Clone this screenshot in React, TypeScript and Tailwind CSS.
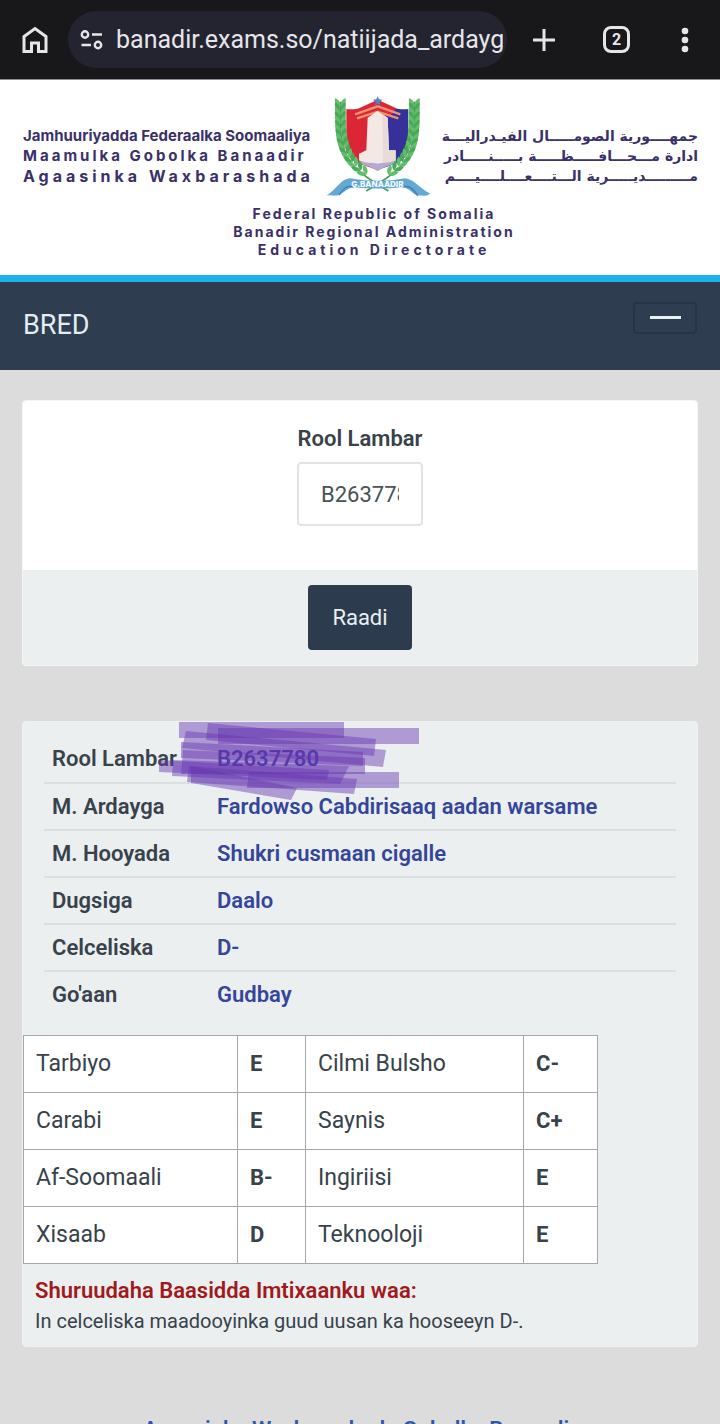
import React from "react";

const details = [
  { label: "Rool Lambar", value: "B2637780" },
  { label: "M. Ardayga", value: "Fardowso Cabdirisaaq aadan warsame" },
  { label: "M. Hooyada", value: "Shukri cusmaan cigalle" },
  { label: "Dugsiga", value: "Daalo" },
  { label: "Celceliska", value: "D-" },
  { label: "Go'aan", value: "Gudbay" },
];

const grades = [
  ["Tarbiyo", "E", "Cilmi Bulsho", "C-"],
  ["Carabi", "E", "Saynis", "C+"],
  ["Af-Soomaali", "B-", "Ingiriisi", "E"],
  ["Xisaab", "D", "Teknooloji", "E"],
];

function BrowserBar() {
  return (
    <header className="flex h-20 shrink-0 items-center border-b border-[#8d8d90] bg-[#18181a] pr-6 pl-[22px] text-[#e6e6ea]">
      <button type="button" aria-label="Home" className="mr-5 shrink-0">
        <svg viewBox="0 0 26 28" className="h-7 w-[26px]" fill="none" stroke="currentColor" strokeWidth="3">
          <path d="M2 25.5V10.5L13 2.5l11 8v15h-7.500V17h-7v8.500Z" />
        </svg>
      </button>
      <div className="flex h-[57px] min-w-0 flex-1 items-center rounded-full bg-[#23242f] pr-1 pl-3">
        <svg viewBox="0 0 24 20" className="mr-3 h-5 w-6 shrink-0" fill="none" stroke="currentColor" strokeWidth="2.4">
          <circle cx="5" cy="4.500" r="3.200" />
          <path d="M12 4.500h10M1.500 15h9.500" />
          <circle cx="18" cy="15" r="3.200" />
        </svg>
        <input
          type="text"
          aria-label="Address"
          defaultValue="banadir.exams.so/natiijada_ardayg"
          className="w-full min-w-0 bg-transparent font-['Roboto',sans-serif] text-[25px] leading-8 outline-none"
        />
      </div>
      <button type="button" aria-label="New tab" className="ml-6 shrink-0">
        <svg viewBox="0 0 26 26" className="size-[26px]" stroke="currentColor" strokeWidth="3" fill="none">
          <path d="M13 2v22M2 13h22" />
        </svg>
      </button>
      <button
        type="button"
        aria-label="Open tabs"
        className="ml-[46px] flex size-[27px] shrink-0 items-center justify-center rounded-lg border-3 border-[#e6e6ea] font-['Roboto',sans-serif] text-base leading-4 font-bold"
      >
        2
      </button>
      <button type="button" aria-label="Menu" className="ml-11 flex w-[22px] shrink-0 justify-center">
        <svg viewBox="0 0 8 26" className="h-[26px] w-2" fill="currentColor">
          <circle cx="4" cy="4" r="3.300" />
          <circle cx="4" cy="13" r="3.300" />
          <circle cx="4" cy="22" r="3.300" />
        </svg>
      </button>
    </header>
  );
}

const leaves = Array.from({ length: 17 }, (_, i) => i);

function Branch() {
  return (
    <g>
      <path d="M64 50C62 130 62 190 96 236C125 270 165 290 208 318" fill="none" stroke="#3f9a4c" strokeWidth="5" />
      {leaves.map((i) => {
        const t = i / 16;
        const x = 64 + 72 * t * t * t * t;
        const y = 58 + 205 * t;
        const turn = -46 * t * t * t;
        return (
          <g key={i} transform={`translate(${x} ${y}) rotate(${turn})`} fill={i % 2 ? "#4aa957" : "#62bd6c"}>
            <path d="M0 8C-14 6 -18 -6 -16 -18C-4 -14 1 -4 0 8Z" />
            <path d="M0 8C14 6 18 -6 16 -18C4 -14 -1 -4 0 8Z" />
          </g>
        );
      })}
    </g>
  );
}

function Emblem() {
  return (
    <svg viewBox="0 0 360 360" className="size-[120px] shrink-0" role="img" aria-label="G.Banaadir">
      <path d="M82 72C112 76 144 66 176 44V258C152 240 90 240 82 196Z" fill="#dc2637" />
      <path d="M176 44C208 66 238 76 268 72V196C260 240 200 240 176 258Z" fill="#35309a" />
      <path d="M120 70L176 44L232 70L214 92H138Z" fill="#dc2637" />
      <path d="M108 88L176 64L244 88M114 100L176 80L238 100" fill="none" stroke="#ee9270" strokeWidth="7" />
      <path d="M146 98L175 78L206 98L210 196H230V232C210 238 192 246 176 258C160 246 142 238 120 232V206L142 196Z" fill="#f3e8e4" />
      <path d="M190 88L206 98L210 196H230V232L192 238Z" fill="#e8dbd8" />
      <path d="M120 226C142 236 160 232 176 236C192 232 210 236 230 226V236C210 240 192 246 176 258C160 246 142 240 120 236Z" fill="#b6a8d0" />
      <path d="M176 34l4 9 10 1-8 7 3 10-9-5-9 5 3-10-8-7 10-1Z" fill="#4a83bd" />
      <Branch />
      <g transform="translate(350 0) scale(-1 1)">
        <Branch />
      </g>
      <path d="M92 280C150 290 205 290 258 280C286 282 300 310 334 326C318 336 306 330 296 332C280 326 272 310 250 306C204 312 146 312 104 306C84 310 74 324 60 330C46 334 34 328 22 332C54 312 66 282 92 280Z" fill="#62a9d6" />
      <path d="M60 330C74 310 84 300 104 306M296 332C282 310 270 300 250 306" fill="none" stroke="#3b7fb4" strokeWidth="4" />
      <text x="175" y="305" textAnchor="middle" fontFamily="Inter, sans-serif" fontWeight="800" fontSize="24" fill="#f4fbff">
        G.BANAADIR
      </text>
    </svg>
  );
}

function Banner() {
  return (
    <section className="border-b-[7px] border-[#1fb2ea] bg-white pt-[5px] pb-4 font-['Inter',sans-serif] font-bold text-[#3a3168]">
      <div className="flex items-start justify-between pr-[22px] pl-[23px]">
        <div className="w-[292px] pt-[41px] text-[15px] leading-5 whitespace-nowrap">
          <p>Jamhuuriyadda Federaalka Soomaaliya</p>
          <p className="tracking-[3px]">Maamulka Gobolka Banaadir</p>
          <p className="text-base leading-5 tracking-[4px]">Agaasinka Waxbarashada</p>
        </div>
        <Emblem />
        <div dir="rtl" lang="ar" className="w-64 pt-[41px] font-['DejaVu_Sans',sans-serif] text-sm leading-5 whitespace-nowrap">
          <p>جمهــــورية الصومـــــال الفيـدراليـــة</p>
          <p>ادارة مـــحـــافـــــظـــــة بـــــنـــــادر</p>
          <p>مـــــــــديـــــرية الـــتــــعــــلــــيــــم</p>
        </div>
      </div>
      <div className="pl-7 text-center text-sm leading-[18px]">
        <p className="tracking-[2px]">Federal Republic of Somalia</p>
        <p className="tracking-[2px]">Banadir Regional Administration</p>
        <p className="tracking-[4px]">Education Directorate</p>
      </div>
    </section>
  );
}

function Scribble() {
  return (
    <svg viewBox="0 0 270 80" className="pointer-events-none absolute top-0 left-[134px] h-20 w-[270px]" aria-hidden="true">
      <g fill="#6636b2" fillOpacity="0.45">
        <path d="M22 0H187V16H22Z" />
        <path d="M61 6H262V22H61Z" />
        <path d="M51 1L219 17L217 34L49 18Z" />
        <path d="M29 9L229 28L226 45L25 26Z" />
        <path d="M24 20L206 30V44L24 36Z" />
        <path d="M26 28L208 36V52H24Z" />
        <path d="M2 38L172 48L170 58L2 50Z" />
        <path d="M16 38L192 44L183 62L15 54Z" />
        <path d="M32 44L200 57L197 72L30 60Z" />
        <path d="M92 50H242V66H90Z" />
        <path d="M34 44L140 66L134 78L34 61Z" />
      </g>
    </svg>
  );
}

export default function App() {
  return (
    <div className="flex h-screen flex-col bg-[#dcdcdc] font-['Roboto',sans-serif] text-[22px] text-[#37424b]">
      <BrowserBar />
      <div className="min-h-0 flex-1 overflow-y-auto [scrollbar-width:none]">
        <Banner />
        <nav className="flex h-[88px] items-start justify-between bg-[#2e3e50] pt-5 pr-[23px] pl-[23px]">
          <a href="#" className="text-[27px] leading-[46px] text-[#e4edf1]">
            BRED
          </a>
          <button
            type="button"
            aria-label="Toggle navigation"
            className="flex h-8 w-16 justify-center rounded border-2 border-[#263443] pt-3"
          >
            <span className="h-[3px] w-[31px] bg-[#e8f1f5]" />
          </button>
        </nav>

        <main className="px-[22px] pt-[30px]">
          <form className="overflow-hidden rounded border border-[#f4f6f6] bg-white" onSubmit={(e) => e.preventDefault()}>
            <div className="flex flex-col items-center pt-[22px] pb-11">
              <label htmlFor="roll" className="mb-[7px] leading-8 font-semibold">
                Rool Lambar
              </label>
              <input
                id="roll"
                type="text"
                defaultValue="B2637780"
                className="h-16 w-[126px] rounded border-2 border-[#e1e5e6] bg-white px-[22px] text-[#4a5256] outline-none"
              />
            </div>
            <div className="flex justify-center bg-[#ebeff0] pt-[15px] pb-[15px]">
              <button type="submit" className="h-[65px] rounded bg-[#2c3c4e] px-6 text-[#eaf0f3]">
                Raadi
              </button>
            </div>
          </form>

          <section className="relative mt-[55px] rounded border border-[#eef2f3] bg-[#ebeff0] pt-[14px] pb-2.5">
            <div className="pr-[21px] pl-[21px]">
              <table className="w-full border-collapse font-semibold">
                <tbody>
                  {details.map((row) => (
                    <tr key={row.label} className="h-[47px] border-b-2 border-[#dcdfe0] last:border-b-0">
                      <th scope="row" className="w-[165px] pl-2 text-left leading-8 font-semibold whitespace-nowrap">
                        {row.label}
                      </th>
                      <td className="pl-2 leading-8 text-[#34459a]">{row.value}</td>
                    </tr>
                  ))}
                </tbody>
              </table>
            </div>
            <Scribble />
            <table className="mt-[17px] w-[574px] table-fixed border-collapse bg-white">
              <colgroup>
                <col className="w-[214px]" />
                <col className="w-[68px]" />
                <col className="w-[218px]" />
                <col className="w-[74px]" />
              </colgroup>
              <tbody>
                {grades.map((row) => (
                  <tr key={row[0]} className="h-[57px]">
                    {row.map((cell, i) => (
                      <td
                        key={i}
                        className={
                          i % 2
                            ? "border border-[#a5a8a9] pl-3 leading-8 font-bold"
                            : "border border-[#a5a8a9] pl-3 text-[23px] leading-8"
                        }
                      >
                        {cell}
                      </td>
                    ))}
                  </tr>
                ))}
              </tbody>
            </table>
            <div className="px-3 pt-3">
              <h2 className="leading-[30px] font-semibold text-[#a01a1c]">Shuruudaha Baasidda Imtixaanku waa:</h2>
              <p className="text-xl leading-[30px]">In celceliska maadooyinka guud uusan ka hooseeyn D-.</p>
            </div>
          </section>
        </main>

        <footer className="pt-[67px] pb-10 text-center leading-8 font-semibold text-[#2e57a6]">
          Agaasinka Waxbarashada Gobolka Banaadir
        </footer>
      </div>
    </div>
  );
}
